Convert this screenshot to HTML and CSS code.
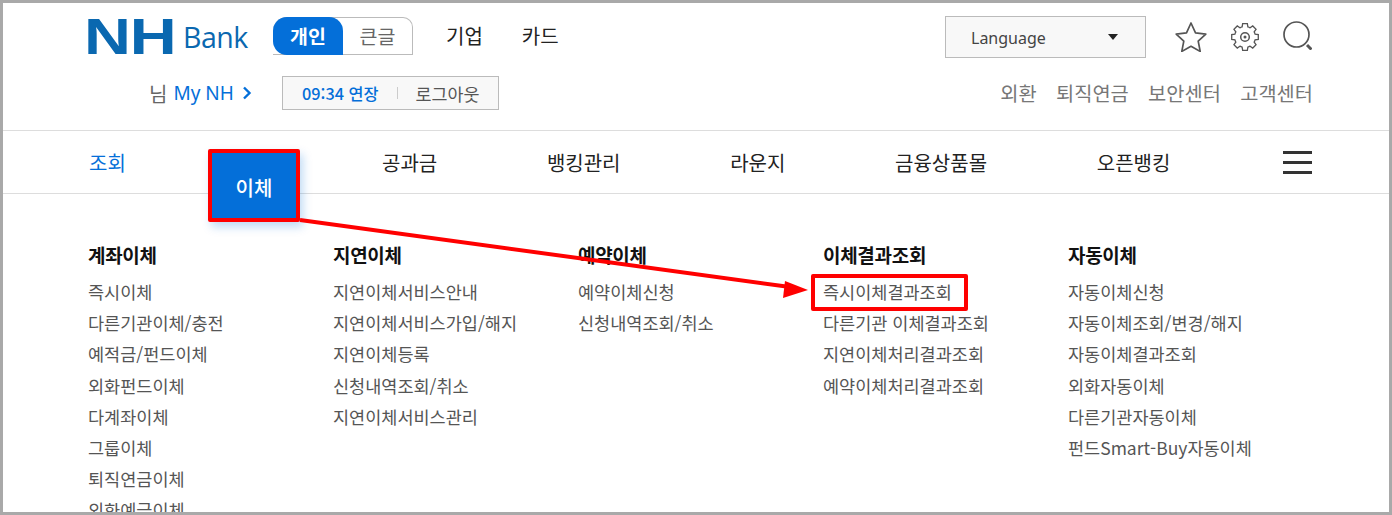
FILE: index.html
```html
<!DOCTYPE html>
<html lang="ko">
<head>
    <meta charset="UTF-8">
    <meta name="viewport" content="width=device-width, initial-scale=1.0">
    <title>NH Bank</title>
    <link rel="stylesheet" href="styles.css">
</head>
<body>
    <div class="frame">
        <header class="top">
            <div class="top-row">
                <div class="logo"><span class="logo-nh">NH</span><span class="logo-bank">Bank</span></div>
                <div class="mode">
                    <span class="mode-on">개인</span>
                    <span class="mode-off">큰글</span>
                </div>
                <ul class="biz">
                    <li>기업</li>
                    <li>카드</li>
                </ul>
                <div class="lang"><span>Language</span><i class="caret"></i></div>
                <div class="icons">
                    <svg width="34" height="32" viewBox="0 0 34 32"><path d="M17 3l4.500 9.800 10.300 1.300-7.600 7.100 2 10.200L17 26.300l-9.200 5.100 2-10.200-7.600-7.100 10.300-1.300z" fill="none" stroke="#555" stroke-width="1.700" stroke-linejoin="round"/></svg>
                    <svg class="ico-gear" width="28" height="28" viewBox="0 0 28 28"><g transform="translate(14 14)" fill="none" stroke="#555" stroke-width="1.300"><path d="M-2.890-10.090L-2.340-13.290 2.340-13.290 2.890-10.090A10.500 10.500 0 0 1 5.090-9.180L7.740-11.050 11.050-7.740 9.180-5.090A10.500 10.500 0 0 1 10.090-2.890L13.290-2.340 13.290 2.340 10.090 2.890A10.500 10.500 0 0 1 9.180 5.090L11.050 7.740 7.740 11.050 5.090 9.180A10.500 10.500 0 0 1 2.890 10.090L2.340 13.290-2.340 13.290-2.890 10.090A10.500 10.500 0 0 1-5.090 9.180L-7.740 11.050-11.050 7.740-9.180 5.090A10.500 10.500 0 0 1-10.090 2.890L-13.290 2.340-13.290-2.340-10.090-2.890A10.500 10.500 0 0 1-9.180-5.090L-11.050-7.740-7.740-11.050-5.090-9.180A10.500 10.500 0 0 1-2.890-10.090z"/><circle r="4.300" stroke-width="1.500"/><circle r="1.500" fill="#555" stroke="none"/></g></svg>
                    <svg width="30" height="30" viewBox="0 0 30 30" fill="none" stroke="#555"><circle cx="14.500" cy="14.500" r="12.500" stroke-width="1.700"/><path d="M25 25l4.500 4.500" stroke-width="3"/></svg>
                </div>
            </div>
            <div class="user-row">
                <div class="my">님 <a>My NH</a><svg class="chev" width="10" height="14" viewBox="0 0 10 14"><path d="M2 1.500L7.500 7 2 12.500" fill="none" stroke="#046fd9" stroke-width="2.400"/></svg></div>
                <div class="session">
                    <span class="session-time">09:34 연장</span>
                    <i class="session-sep"></i>
                    <span class="session-out">로그아웃</span>
                </div>
                <ul class="util">
                    <li>외환</li>
                    <li>퇴직연금</li>
                    <li>보안센터</li>
                    <li>고객센터</li>
                </ul>
            </div>
        </header>
        <nav class="gnb">
            <ul>
                <li class="gnb-first">조회</li>
                <li class="gnb-active"><span class="gnb-tab">이체</span></li>
                <li>공과금</li>
                <li>뱅킹관리</li>
                <li>라운지</li>
                <li>금융상품몰</li>
                <li>오픈뱅킹</li>
            </ul>
            <div class="burger"><i></i><i></i><i></i></div>
        </nav>
        <main class="mega">
            <section>
                <h3>계좌이체</h3>
                <ul>
                    <li>즉시이체</li>
                    <li>다른기관이체/충전</li>
                    <li>예적금/펀드이체</li>
                    <li>외화펀드이체</li>
                    <li>다계좌이체</li>
                    <li>그룹이체</li>
                    <li>퇴직연금이체</li>
                    <li>외화예금이체</li>
                </ul>
            </section>
            <section>
                <h3>지연이체</h3>
                <ul>
                    <li>지연이체서비스안내</li>
                    <li>지연이체서비스가입/해지</li>
                    <li>지연이체등록</li>
                    <li>신청내역조회/취소</li>
                    <li>지연이체서비스관리</li>
                </ul>
            </section>
            <section>
                <h3>예약이체</h3>
                <ul>
                    <li>예약이체신청</li>
                    <li>신청내역조회/취소</li>
                </ul>
            </section>
            <section>
                <h3>이체결과조회</h3>
                <ul>
                    <li>즉시이체결과조회</li>
                    <li>다른기관 이체결과조회</li>
                    <li>지연이체처리결과조회</li>
                    <li>예약이체처리결과조회</li>
                </ul>
            </section>
            <section>
                <h3>자동이체</h3>
                <ul>
                    <li>자동이체신청</li>
                    <li>자동이체조회/변경/해지</li>
                    <li>자동이체결과조회</li>
                    <li>외화자동이체</li>
                    <li>다른기관자동이체</li>
                    <li>펀드Smart-Buy자동이체</li>
                </ul>
            </section>
        </main>
        <!-- red callouts drawn over the page -->
        <div class="mark-box"></div>
        <svg class="mark-arrow" width="1392" height="515" viewBox="0 0 1392 515">
            <path d="M300 220L790 287" fill="none" stroke="#f00" stroke-width="4"/>
            <path d="M808 290L785 281L783 298z" fill="#f00"/>
        </svg>
    </div>
</body>
</html>
```

FILE: styles.css
```css
* {
    box-sizing: border-box;
}
body {
    margin: 0;
    background-color: white;
    font-family: "Noto Sans CJK KR", "Noto Sans", sans-serif;
}
ul {
    list-style-type: none;
    margin: 0;
    padding: 0;
}
.frame {
    position: relative;
    width: 1392px;
    height: 515px;
    border: 3px solid #a9a9a9;
    overflow: hidden;
    background-color: white;
}
.top {
    height: 128px;
    border-bottom: 1px solid #ddd;
}
.top-row {
    display: flex;
    align-items: flex-start;
    height: 73px;
    padding: 13px 77px 0 85px;
}
.logo {
    display: flex;
    align-items: flex-end;
    width: 185px;
    height: 39px;
    font-family: "Liberation Sans", sans-serif;
    color: #0a68b0;
}
.logo-nh {
    display: block;
    width: 95px;
    margin-top: 2px;
    font-size: 50px;
    line-height: 38px;
    font-weight: bold;
    letter-spacing: -1px;
    transform: translate(-4px, 1px) scaleX(1.3);
    transform-origin: left center;
}
.logo-bank {
    font-family: "Open Sans", sans-serif;
    font-size: 28.500px;
    line-height: 36px;
    letter-spacing: -0.5px;
}
.mode {
    display: flex;
    width: 140px;
    height: 38px;
    margin-top: 1px;
    border: 1px solid #bbb;
    border-left: none;
    border-radius: 14px 10px 0 0;
    font-size: 19.500px;
    line-height: 36px;
    text-align: center;
}
.mode-on {
    width: 70px;
    margin: -1px 0;
    line-height: 38px;
    color: white;
    font-weight: bold;
    background-color: #046fd9;
    border-radius: 14px 14px 0 14px;
}
.mode-off {
    flex: 1;
    color: #666;
}
.biz {
    display: flex;
    gap: 39px;
    margin-left: 33px;
    font-size: 20px;
    line-height: 40px;
    color: #222;
}
.lang {
    display: flex;
    align-items: center;
    justify-content: space-between;
    width: 201px;
    height: 42px;
    margin-left: auto;
    padding: 0 27px 0 25px;
    border: 1px solid #bbb;
    background-color: #f8f8f8;
    font-family: "Noto Sans", sans-serif;
    font-size: 16px;
    color: #444;
}
.lang span {
    margin-top: 2px;
}
.caret {
    border-top: 6px solid #222;
    border-left: 5px solid transparent;
    border-right: 5px solid transparent;
}
.icons {
    display: flex;
    gap: 23px;
    margin-left: 28px;
    padding-top: 4px;
}
.ico-gear {
    margin-top: 3px;
}
.user-row {
    display: flex;
    align-items: flex-start;
    padding: 0 77px 0 146px;
}
.my {
    display: flex;
    align-items: center;
    gap: 6px;
    width: 133px;
    height: 34px;
    font-size: 20px;
    color: #666;
}
.my a {
    color: #046fd9;
    font-family: "Noto Sans", sans-serif;
    font-size: 19px;
}
.chev {
    margin-left: 2px;
}
.session {
    display: flex;
    align-items: center;
    width: 217px;
    height: 34px;
    padding-left: 19px;
    border: 1px solid #bbb;
    background-color: #f8f8f8;
    font-size: 16.300px;
}
.session-time {
    color: #046fd9;
    font-weight: 500;
}
.session-sep {
    width: 1px;
    height: 12px;
    margin: 0 18px;
    background-color: #ccc;
}
.session-out {
    font-size: 17.400px;
    color: #555;
}
.util {
    display: flex;
    gap: 19.300px;
    margin-left: auto;
    margin-right: -1px;
    font-size: 19.800px;
    line-height: 34px;
    color: #777;
}
.gnb {
    display: flex;
    align-items: center;
    justify-content: space-between;
    height: 63px;
    padding: 0 77px 0 86px;
    border-bottom: 1px solid #ddd;
}
.gnb ul {
    display: flex;
    gap: 109.700px;
    font-size: 20px;
    color: #222;
}
.gnb-first {
    color: #046fd9;
}
.gnb-active {
    position: relative;
    width: 36.800px;
}
.gnb-tab {
    position: absolute;
    left: -27.500px;
    top: 1px;
    width: 92px;
    height: 73px;
    border: 4px solid #f00;
    border-radius: 2px;
    background-color: #046fd9;
    color: white;
    font-weight: 500;
    line-height: 70px;
    text-align: center;
    box-shadow: 3px 5px 10px rgba(4, 111, 217, 0.25);
}
.burger {
    display: flex;
    flex-direction: column;
    gap: 7px;
    width: 29px;
}
.burger i {
    height: 3px;
    background-color: #333;
}
.mega {
    display: grid;
    grid-template-columns: repeat(5, 245px);
    padding: 46px 0 0 85px;
}
.mega h3 {
    margin: 0 0 6px;
    font-size: 19px;
    line-height: 30px;
    font-weight: 700;
    letter-spacing: -0.300px;
    color: #111;
}
.mega li {
    font-size: 17.500px;
    line-height: 31.200px;
    white-space: nowrap;
    color: #555;
}
.mark-box {
    position: absolute;
    left: 808px;
    top: 271px;
    width: 157px;
    height: 37px;
    border: 4px solid #f00;
    border-radius: 2px;
}
.mark-arrow {
    position: absolute;
    left: -3px;
    top: -3px;
}
```
